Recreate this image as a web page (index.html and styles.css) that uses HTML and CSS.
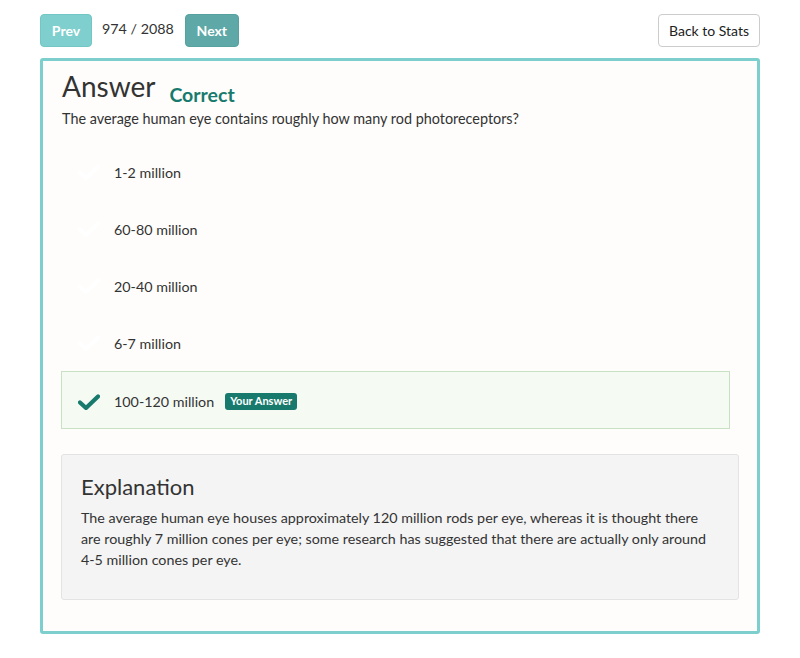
FILE: index.html
```html
<!DOCTYPE html>
<html>
<head>
<meta charset="utf-8">
<link rel="stylesheet" href="styles.css">
</head>
<body>
<div class="page">
  <div class="topbar">
    <div class="nav">
      <button class="btn btn-prev">Prev</button>
      <span class="counter">974 / 2088</span>
      <button class="btn btn-next">Next</button>
    </div>
    <button class="btn btn-back">Back to Stats</button>
  </div>
  <div class="card">
    <div class="title-row">
      <h2 class="title">Answer</h2>
      <span class="status">Correct</span>
    </div>
    <p class="question">The average human eye contains roughly how many rod photoreceptors?</p>
    <ul class="options">
      <li class="option">
        <svg class="check faint" viewBox="0 0 22 16"><path d="M2 8.5 L8 14 L20 2.5" /></svg>
        <span>1-2 million</span>
      </li>
      <li class="option">
        <svg class="check faint" viewBox="0 0 22 16"><path d="M2 8.5 L8 14 L20 2.5" /></svg>
        <span>60-80 million</span>
      </li>
      <li class="option">
        <svg class="check faint" viewBox="0 0 22 16"><path d="M2 8.5 L8 14 L20 2.5" /></svg>
        <span>20-40 million</span>
      </li>
      <li class="option">
        <svg class="check faint" viewBox="0 0 22 16"><path d="M2 8.5 L8 14 L20 2.5" /></svg>
        <span>6-7 million</span>
      </li>
      <li class="option selected">
        <svg class="check" viewBox="0 0 22 16"><path d="M2 8.5 L8 14 L20 2.5" /></svg>
        <span>100-120 million</span>
        <span class="badge">Your Answer</span>
      </li>
    </ul>
    <div class="explanation">
      <h3 class="exp-title">Explanation</h3>
      <p class="exp-text">The average human eye houses approximately 120 million rods per eye, whereas it is thought there are roughly 7 million cones per eye; some research has suggested that there are actually only around 4-5 million cones per eye.</p>
    </div>
  </div>
</div>
</body>
</html>
```

FILE: styles.css
```css
* { box-sizing: border-box; }
html, body { margin: 0; padding: 0; background: #fff; }
body {
  font-family: Lato, "Open Sans", sans-serif;
  color: #333;
  font-size: 15px;
}
.page {
  padding: 14px 40px 0 40px;
  width: 800px;
}
.topbar {
  display: flex;
  justify-content: space-between;
  align-items: center;
  height: 33px;
}
.nav {
  display: flex;
  align-items: center;
}
.btn {
  font-family: inherit;
  height: 33px;
  border-radius: 4px;
  font-size: 14px;
  cursor: pointer;
}
.btn-prev, .btn-next {
  color: #fff;
  font-weight: 700;
  border: 1px solid transparent;
}
.btn-prev {
  width: 52px;
  background: #7ecfcd;
  border-color: #72c6c4;
}
.btn-next {
  width: 54px;
  background: #5ea9a7;
  border-color: #57a19f;
}
.counter {
  font-size: 14.3px;
  color: #333;
  margin: -4px 11px 0 10px;
}
.btn-back {
  width: 102px;
  background: #fff;
  border: 1px solid #ccc;
  color: #222;
  font-size: 14px;
}
.card {
  margin-top: 11px;
  border: 3px solid #7dcfcd;
  border-radius: 3px;
  background: #fefdfb;
  padding: 7px 18px 31px 18px;
  height: 576px;
}
.title-row {
  display: flex;
  align-items: baseline;
}
.title {
  margin: 0 0 0 1px;
  font-size: 28px;
  font-weight: 400;
  color: #333;
  line-height: 36px;
}
.status {
  color: #177a6d;
  font-weight: 700;
  font-size: 19.5px;
  margin-left: 14px;
  position: relative;
  top: 5px;
}
.question {
  margin: 5px 0 0 1px;
  line-height: 20px;
  font-size: 14.4px;
}
.options {
  list-style: none;
  margin: 14px 9px 0 0;
  padding: 0;
}
.option {
  display: flex;
  align-items: center;
  height: 57px;
  padding-left: 16px;
  border: 1px solid transparent;
  padding-top: 1px;
  font-size: 14.3px;
}
.option.selected {
  height: 58px;
  background: #f5faf3;
  border-color: #c8e0c3;
  padding-top: 3px;
}
.check {
  width: 22px;
  height: 16px;
  margin-right: 14px;
  fill: none;
  stroke: #177a6d;
  stroke-width: 4.2;
  stroke-linecap: round;
  stroke-linejoin: round;
}
.check.faint { stroke: #fff; }
.badge {
  margin-left: 11px;
  background: #177a6d;
  color: #fff;
  font-weight: 700;
  font-size: 11px;
  border-radius: 3px;
  padding: 2px 5px 3px;
  line-height: 12px;
}
.explanation {
  margin-top: 25px;
  background: #f4f4f4;
  border: 1px solid #e3e3e3;
  border-radius: 3px;
  padding: 19px 19px 29px 19px;
  height: 146px;
}
.exp-title {
  margin: 0;
  font-size: 22px;
  font-weight: 400;
  line-height: 26px;
  color: #333;
}
.exp-text {
  margin: 7px 0 0 0;
  line-height: 21px;
  font-size: 14.3px;
}
```
